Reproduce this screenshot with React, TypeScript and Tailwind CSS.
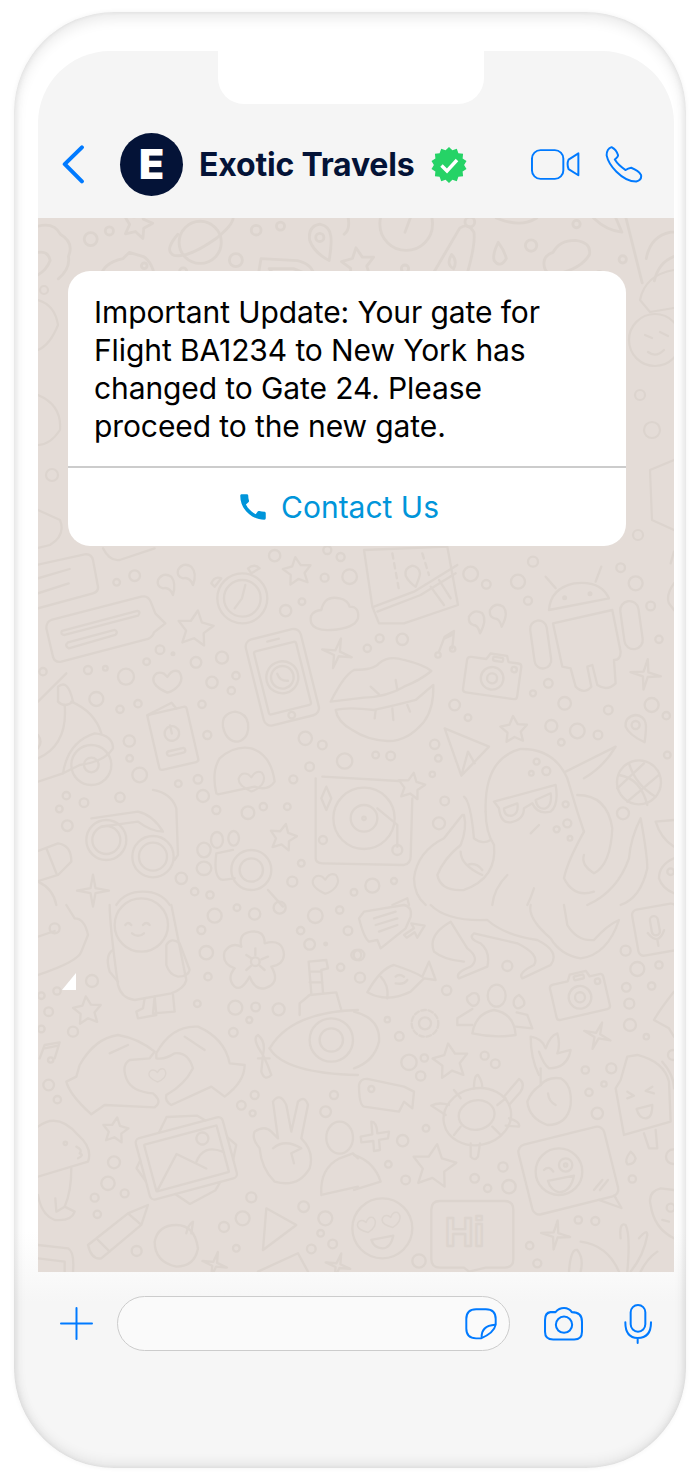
import { MdCall } from "react-icons/md";

const WALL = "#dcd4ce";
const BLUE = "#007aff";

type Dot = [number, number, number];

function starPoints(x: number, y: number, r: number, rot = 0, n = 5, inner = 0.5) {
  const pts: string[] = [];
  for (let i = 0; i < n * 2; i++) {
    const rad = i % 2 === 0 ? r : r * inner;
    const a = (Math.PI * i) / n - Math.PI / 2 + (rot * Math.PI) / 180;
    pts.push(`${(x + rad * Math.cos(a)).toFixed(1)},${(y + rad * Math.sin(a)).toFixed(1)}`);
  }
  return pts.join(" ");
}

function Star({ x, y, r, rot = 0 }: { x: number; y: number; r: number; rot?: number }) {
  return <polygon points={starPoints(x, y, r, rot)} />;
}

function Spark({ x, y, r, rot = 0 }: { x: number; y: number; r: number; rot?: number }) {
  return <polygon points={starPoints(x, y, r, rot, 4, 0.22)} />;
}

function Dots({ list }: { list: Dot[] }) {
  return (
    <>
      {list.map(([x, y, r], i) => (
        <circle key={i} cx={x} cy={y} r={r} />
      ))}
    </>
  );
}

function Heart({ x, y, s = 1, rot = 0 }: { x: number; y: number; s?: number; rot?: number }) {
  return (
    <path
      transform={`translate(${x} ${y}) rotate(${rot}) scale(${s})`}
      d="M0 35 Q-45 15 -42 -8 Q-35 -32 -10 -22 L0 -12 Q15 -38 35 -28 Q50 -10 35 12 Q20 30 0 35Z"
    />
  );
}

function Camera({ x, y, rot }: { x: number; y: number; rot: number }) {
  return (
    <g transform={`translate(${x} ${y}) rotate(${rot})`}>
      <path d="M-70 -50 H-25 L-15 -68 H35 L42 -50 H72 Q82 -50 82 -40 V48 Q82 58 72 58 H-72 Q-82 58 -82 48 V-40 Q-82 -50 -70 -50Z" />
      <circle cx="0" cy="5" r="34" />
      <circle cx="0" cy="5" r="15" />
      <rect x="-5" y="-60" width="30" height="12" rx="4" />
      <circle cx="62" cy="-30" r="8" />
    </g>
  );
}

function TopStrip() {
  return (
    <g transform="translate(38 218) scale(0.4055)">
      <path d="M0 20 Q40 10 55 40 Q90 60 75 95 Q80 125 50 150" />
      <path d="M0 85 Q25 80 30 105 Q20 130 0 140" />
      <Dots
        list={[
          [130, 52, 16],
          [176, 32, 10],
          [538, 30, 12],
          [598, 20, 10],
          [488, 104, 16],
          [358, 132, 9],
          [905, 125, 9],
          [1216, 68, 14],
          [1328, 15, 9],
          [1442, 102, 9],
          [1384, 142, 10],
        ]}
      />
      <Star x={245} y={15} r={38} rot={15} />
      <circle cx="400" cy="60" r="52" />
      <path d="M345 40 Q310 80 335 92 Q370 100 440 50 Q490 10 480 -10" />
      <path d="M150 160 Q155 110 210 100 L225 85 L260 95 Q285 110 290 160" />
      <circle cx="262" cy="118" r="7" />
      <path d="M695 15 Q665 20 670 55 Q680 85 718 105 Q725 60 722 45 Q720 20 695 15Z" />
      <circle cx="695" cy="48" r="10" />
      <Star x={790} y={115} r={42} rot={-8} />
      <circle cx="908" cy="15" r="65" />
      <path d="M905 35 L920 -5" />
      <path d="M955 170 L1040 25 Q1060 10 1075 35 Q1080 70 1050 165" />
      <circle cx="1065" cy="10" r="12" />
      <path d="M1020 90 Q1035 105 1025 125 Q1005 115 1020 90Z" />
      <path d="M1135 60 Q1120 90 1125 105 Q1140 125 1155 100 Q1150 80 1135 60Z" />
      <path d="M1250 125 Q1240 95 1270 85 Q1285 55 1325 55 Q1365 60 1360 90 Q1340 125 1280 138 Q1255 140 1250 125Z" />
      <path d="M540 160 L550 100 L640 105 Q680 115 680 145 L630 125 L570 125 L600 160" />
      <path d="M1450 0 L1490 160 M1500 100 Q1510 45 1560 35 L1568 35 M1520 155 Q1530 110 1568 95" />
      <path d="M1130 0 Q1190 25 1230 0 M1370 0 Q1400 30 1440 35 L1425 0" />
      <path d="M765 0 Q770 30 755 40" />
    </g>
  );
}

function SideStrips() {
  return (
    <g>
      <path d="M38 300 Q55 305 58 325 Q50 345 38 350" />
      <path d="M38 395 Q62 405 60 430 Q50 445 38 445" />
      <circle cx="52" cy="475" r="6" />
      <circle cx="44" cy="290" r="4" />
      <path d="M38 510 L60 520 Q66 535 50 545 L38 548" />
      <circle cx="655" cy="340" r="26" />
      <path d="M645 335 L652 338 M660 332 L668 336 M648 352 Q656 358 664 350" />
      <path d="M674 270 Q645 275 640 300 L650 312 L674 308" />
      <circle cx="640" cy="395" r="5" />
      <circle cx="652" cy="430" r="8" />
      <path d="M674 460 L650 470 L652 520 L674 530" />
      <circle cx="638" cy="535" r="5" />
    </g>
  );
}

function QuadOne() {
  return (
    <g transform="translate(38 545) scale(0.3333)">
      <Dots
        list={[
          [290, 92, 16], [236, 112, 10], [710, 32, 17], [908, 36, 12], [860, 98, 12], [935, 95, 22],
          [792, 170, 10], [743, 197, 17], [366, 314, 13], [326, 350, 10], [474, 352, 16], [552, 338, 18],
          [150, 375, 12], [202, 370, 7], [15, 380, 11], [264, 395, 24], [522, 412, 17], [594, 392, 11],
          [580, 437, 11], [175, 462, 21], [300, 476, 11], [246, 493, 11], [492, 478, 11], [508, 570, 12],
          [274, 588, 17], [275, 640, 10], [305, 690, 22], [802, 580, 20], [853, 600, 13], [815, 665, 13],
          [920, 648, 23], [766, 703, 12], [480, 703, 13], [421, 716, 10], [495, 753, 18], [535, 795, 12],
          [630, 803, 19], [676, 785, 11], [748, 785, 10], [85, 752, 11], [246, 757, 14], [138, 773, 13],
          [64, 792, 10], [88, 842, 16], [430, 1000, 17], [470, 1040, 11], [516, 1050, 11], [763, 1010, 15],
          [790, 955, 10], [948, 1042, 10], [868, 15, 12], [405, 326, 4],
        ]}
      />
      <path d="M-5 60 L140 28 Q160 25 165 45 L180 125 Q182 140 165 145 L0 190" />
      <path d="M0 100 L95 72 M0 145 L92 115" />
      <path d="M195 10 Q215 50 245 45 L350 10" />
      <path d="M40 225 L310 155 Q330 150 338 170 L352 205 L382 235 L348 262 Q345 275 330 282 L70 350 Q50 354 45 335 L25 250 Q25 230 40 225Z" />
      <path d="M72 258 L298 198 Q310 200 300 212 L80 270 Q65 268 72 258Z" />
      <path d="M90 292 L230 255 Q242 260 232 270 L92 310 Q78 302 90 292Z" />
      <path d="M360 105 Q375 80 400 95 Q415 115 405 150 Q395 125 375 130 Q355 125 360 105Z" />
      <path d="M420 75 Q435 50 460 65 Q478 85 465 120 Q455 95 435 100 Q415 95 420 75Z" />
      <circle cx="613" cy="160" r="75" />
      <circle cx="613" cy="160" r="55" />
      <path d="M622 120 L612 160 L590 190" />
      <path d="M520 115 Q530 92 550 100 L530 125Z" />
      <path d="M630 70 Q650 55 665 70 L640 85Z" />
      <Star x={472} y={252} r={56} rot={8} />
      <Star x={778} y={80} r={44} rot={-8} />
      <Star x={735} y={878} r={42} rot={12} />
      <path d="M820 235 Q810 200 850 195 Q860 150 905 160 Q930 165 935 185 Q965 185 960 220 Q950 250 880 255 Q830 258 820 235Z" />
      <g transform="translate(733 397) rotate(-14)">
        <rect x="-85" y="-133" width="170" height="266" rx="22" />
        <rect x="-65" y="-95" width="130" height="195" rx="6" />
        <path d="M-18 -115 H18" />
        <circle cx="0" cy="117" r="10" />
        <circle cx="0" cy="0" r="48" />
        <circle cx="0" cy="0" r="34" />
        <path d="M-12 -14 Q-10 10 14 14" />
      </g>
      <Spark x={897} y={325} r={46} rot={15} />
      <Heart x={388} y={408} s={1} />
      <g transform="translate(405 580) rotate(-13)">
        <rect x="-60" y="-85" width="120" height="170" rx="8" />
        <path d="M-60 -85 L20 -105 L30 -85" />
        <circle cx="0" cy="-15" r="22" />
        <path d="M0 -40 V-15" />
        <rect x="-28" y="35" width="56" height="14" rx="7" />
      </g>
      <path d="M592 500 Q550 505 555 545 Q565 590 600 590 Q635 580 630 535 Q625 505 592 500Z" />
      <path d="M535 745 Q520 680 545 640 Q590 600 640 610 Q700 630 710 710 Q690 740 650 725 L540 748Z" />
      <Heart x={640} y={708} s={0.9} />
      <path d="M0 640 Q90 600 80 480 M100 470 Q170 500 190 565" />
      <path d="M60 425 Q90 400 105 470 Q80 490 60 470Z" />
      <path d="M0 470 L85 385" />
      <circle cx="160" cy="660" r="60" />
      <circle cx="160" cy="660" r="22" />
      <path d="M75 685 Q90 590 170 565 Q225 570 225 610 Q200 650 125 660Z" />
      <path d="M0 710 L75 685 M0 570 Q15 590 0 610" />
      <circle cx="205" cy="885" r="60" />
      <circle cx="205" cy="885" r="42" />
      <circle cx="345" cy="935" r="62" />
      <circle cx="345" cy="935" r="42" />
      <path d="M160 820 L300 800 Q345 810 375 860 Q340 860 300 830 L190 845" />
      <path d="M345 735 Q400 745 415 790 L420 930 L410 945" />
      <path d="M-5 920 L60 895 Q100 900 100 950 L60 990 L-5 1010 M25 910 L55 985" />
      <path d="M0 1010 Q45 1030 55 1080" />
      <Spark x={165} y={1037} r={48} />
      <ellipse cx="537" cy="885" rx="18" ry="24" />
      <ellipse cx="587" cy="880" rx="16" ry="22" />
      <ellipse cx="498" cy="915" rx="20" ry="22" />
      <ellipse cx="498" cy="970" rx="22" ry="20" />
      <path d="M585 915 L535 925 Q525 1000 555 1005 L590 1000" />
      <circle cx="640" cy="975" r="60" />
      <circle cx="640" cy="975" r="35" />
      <path d="M690 1035 L735 1085" />
      <path d="M865 725 L880 760 L865 795 L850 760Z" />
      <circle cx="855" cy="885" r="12" />
      <Heart x={862} y={1015} s={0.9} />
      <path d="M235 1080 Q260 1040 315 1040 Q370 1040 395 1080" />
    </g>
  );
}

function QuadTwo() {
  return (
    <g transform="translate(354 545) scale(0.3333)">
      <Dots
        list={[
          [350, 87, 22], [397, 118, 13], [492, 110, 21], [537, 50, 15], [522, 167, 12], [800, 68, 13],
          [845, 115, 21], [890, 183, 13], [915, 283, 11], [77, 280, 12], [40, 310, 11], [145, 283, 17],
          [302, 480, 16], [342, 518, 10], [583, 415, 13], [537, 445, 9], [632, 475, 19], [763, 495, 13],
          [893, 480, 21], [937, 512, 11], [592, 543, 18], [670, 558, 22], [732, 570, 13], [622, 592, 10],
          [242, 598, 14], [253, 640, 10], [235, 688, 8], [65, 630, 10], [110, 633, 13], [940, 630, 10],
          [272, 768, 13], [255, 835, 18], [807, 805, 18], [120, 1008, 9], [55, 1022, 21],
        ]}
      />
      <path d="M30 15 L280 5 L312 180 L150 235 L75 235 L55 185Z" />
      <path d="M60 185 L180 140 L310 60 M70 200 L200 150 L305 85 M230 125 L270 180 M255 105 L290 160" />
      <path d="M175 62 Q150 70 155 92 Q165 112 185 125 Q198 95 198 85 Q195 65 175 62Z" />
      <path d="M115 25 L135 135 M205 25 L225 90" strokeDasharray="16 14" />
      <path d="M345 215 Q360 190 385 205 Q400 225 378 265 Q372 240 358 240 Q342 235 345 215Z" />
      <path d="M408 195 Q423 170 448 185 Q465 205 443 245 Q437 220 421 220 Q405 215 408 195Z" />
      <path d="M255 320 L272 275 L300 258 L295 310 M272 280 L298 268" />
      <circle cx="252" cy="330" r="8" />
      <circle cx="296" cy="312" r="8" />
      <Camera x={415} y={395} rot={8} />
      <path d="M585 195 Q590 130 660 115 Q740 105 765 160Z" />
      <path d="M605 130 L575 95 M725 110 L742 65" />
      <circle cx="632" cy="158" r="4" />
      <circle cx="708" cy="146" r="4" />
      <path d="M597 235 L775 195 L800 320 Q800 345 780 345 L785 415 Q760 440 730 420 L715 360 L700 365 L712 425 Q690 450 665 425 L650 370 L625 365Z" />
      <rect x="535" y="226" width="50" height="145" rx="25" transform="rotate(-8 560 298)" />
      <rect x="805" y="168" width="55" height="145" rx="27" transform="rotate(-8 832 240)" />
      <Spark x={875} y={388} r={46} rot={8} />
      <path d="M-70 470 Q-30 390 0 375 Q60 375 75 355 Q105 330 150 345 Q210 360 232 378 Q200 405 150 425 Q100 455 30 458Z" />
      <path d="M-55 495 Q-20 485 60 495 Q130 480 185 465 Q215 440 238 420 Q240 490 210 530 Q160 590 100 588 Q40 585 -5 555 Q-50 530 -55 495Z" />
      <path d="M50 425 L75 448 M125 405 L130 435 M65 495 L62 520 M115 490 L118 525 M160 480 L168 500" />
      <path d="M272 550 L405 605 L322 692Z M322 692 L342 620 L362 655" />
      <Star x={480} y={555} r={42} rot={-4} />
      <path d="M845 510 Q812 515 815 545 Q825 570 872 592 Q878 545 875 535 Q870 512 845 510Z" />
      <circle cx="845" cy="540" r="12" />
      <circle cx="855" cy="712" r="66" />
      <path d="M795 690 Q860 700 880 780 M825 655 Q845 720 905 755 M790 730 L870 655 M820 770 L915 690" />
      <path d="M395 800 Q390 640 500 612 Q600 610 640 700 L670 800 L690 860" />
      <path d="M420 770 L605 720 Q615 780 590 800 Q550 810 535 775 L510 790 Q510 825 470 832 Q440 835 435 790Z" />
      <path d="M450 790 Q450 815 475 812 Q495 805 490 775Z M545 765 Q550 795 575 790 Q595 780 590 745Z" />
      <Dots list={[[577, 678, 12], [548, 650, 9], [532, 685, 7], [635, 778, 9], [640, 835, 12], [608, 853, 9], [648, 880, 7]]} />
      <path d="M530 865 L555 840" />
      <path d="M395 800 Q395 860 420 900 Q430 1000 330 1035 Q260 1040 250 990 Q270 940 320 900 Q340 850 330 810" />
      <path d="M330 755 Q350 770 360 880 Q385 900 410 885" />
      <path d="M180 1000 Q190 920 270 880 L325 810 M180 1000 Q180 1050 215 1080" />
      <path d="M320 920 Q320 960 385 990 M340 960 Q365 950 385 975" />
      <path d="M635 680 L785 605 Q750 665 690 700" />
      <path d="M690 860 Q640 950 630 1000 Q660 1060 720 1040" />
      <path d="M670 750 Q760 750 775 850 Q770 960 720 985 Q680 960 690 930" />
      <path d="M860 820 Q830 880 825 940 Q790 1040 700 1080 M860 820 Q880 930 880 970 Q860 1060 800 1080" />
      <path d="M460 990 Q420 1030 415 1080 M540 1030 Q530 1060 520 1080" />
      <path d="M905 830 L960 825 M905 830 Q920 880 960 905" />
      <path d="M960 940 Q915 960 915 1000 Q925 1030 960 1045" />
      <path d="M960 115 Q935 150 945 175 L960 195 M960 20 L950 55" />
      <circle cx="950" cy="980" r="10" />
      <path d="M115 1080 L160 1060 L165 1080" />
      <path d="M-115 700 L-115 940 Q-115 955 -95 955 L150 960 Q170 955 170 935 L175 760" />
      <path d="M-95 695 L135 708" />
      <circle cx="30" cy="820" r="92" />
      <circle cx="30" cy="820" r="40" />
      <circle cx="30" cy="820" r="5" />
      <path d="M70 790 L130 840 L130 905" />
      <circle cx="130" cy="915" r="15" />
      <Star x={172} y={725} r={42} rot={10} />
    </g>
  );
}

function QuadThree() {
  return (
    <g transform="translate(38 905) scale(0.3333)">
      <Dots
        list={[
          [530, 32, 21], [650, 27, 17], [597, 8, 10], [725, 8, 18], [832, 32, 22], [905, 15, 11], [490, 75, 12],
          [788, 77, 11], [930, 77, 13], [815, 118, 16], [505, 143, 20], [863, 117, 4], [510, 215, 11], [908, 187, 11],
          [955, 150, 15], [162, 228, 18], [10, 272, 10], [57, 258, 11], [32, 320, 13], [478, 296, 10], [592, 308, 21],
          [653, 306, 13], [722, 313, 18], [634, 345, 9], [10, 372, 10], [105, 380, 15], [586, 382, 13], [32, 540, 16],
          [58, 584, 11], [650, 570, 12], [610, 601, 13], [644, 625, 9], [888, 570, 12], [863, 620, 16], [228, 772, 18],
          [210, 835, 20], [260, 865, 12], [170, 878, 12], [178, 928, 11], [640, 877, 15], [797, 905, 16], [862, 940, 21],
          [848, 985, 10], [614, 940, 21], [558, 966, 15], [884, 1017, 13], [820, 1032, 13], [595, 1030, 10], [296, 1038, 15],
        ]}
      />
      <path d="M0 210 Q120 170 130 140 L150 90 Q140 40 110 40 L85 0" />
      <circle cx="50" cy="70" r="15" />
      <path d="M0 95 L50 78" />
      <circle cx="310" cy="60" r="80" />
      <path d="M215 0 Q215 60 240 240 Q250 280 290 285 L400 265 Q440 250 445 225 L400 0" />
      <path d="M385 120 Q400 95 425 115 L455 195 Q450 215 420 215 Q395 210 385 180Z" />
      <path d="M225 135 Q200 150 215 200 L240 230" />
      <path d="M320 280 L315 310 L295 320 L300 340 L355 330 L350 275 M350 275 L345 325 L410 320 L405 270" />
      <path d="M262 60 Q270 48 280 60 M315 60 Q325 48 335 60 M282 85 Q300 100 318 85" />
      <Star x={148} y={318} r={44} rot={-6} />
      <path d="M5 460 L20 420 L65 412 L50 460 M20 430 L60 422" />
      <circle cx="38" cy="465" r="8" />
      <path d="M350 440 Q300 400 240 390 Q170 400 125 480 L115 515 L85 530 Q95 570 160 628 L200 600 L350 607 Q375 590 345 565 Q280 560 265 520 Q250 480 275 465 L335 460Z" />
      <path d="M355 445 Q400 360 480 365 Q560 400 575 475 L620 480 Q620 530 560 575 L520 545 L400 600 Q380 590 385 570 Q440 540 465 490 Q450 440 410 445 Q380 465 355 460Z" />
      <path d="M215 445 L270 420 M440 395 L500 435" />
      <Heart x={358} y={510} s={0.6} />
      <path d="M640 80 Q680 75 680 115 Q735 100 738 150 Q735 180 700 185 Q730 235 680 250 Q650 255 635 215 Q610 260 590 245 Q565 220 590 190 Q550 175 560 140 Q580 110 610 125 Q600 85 640 80Z" />
      <circle cx="652" cy="170" r="13" />
      <path d="M652 130 V150 M625 150 L640 160 M625 195 L640 182 M680 195 L665 182 M690 155 L670 163" />
      <path d="M695 430 Q760 320 960 315" />
      <path d="M695 430 Q740 505 960 510" />
      <circle cx="880" cy="405" r="65" />
      <circle cx="880" cy="405" r="35" />
      <path d="M785 330 L785 295 L815 270 L895 262 L910 315" />
      <path d="M820 265 L812 170 L865 165 L870 190 L850 195 L855 262 M815 200 H848 M815 232 H852" />
      <path d="M675 450 Q640 400 660 390 Q685 410 675 450 Q690 480 700 510 Q680 530 670 500Z M660 460 H695" />
      <g transform="translate(445 760) rotate(-15)">
        <rect x="-135" y="-95" width="270" height="190" rx="14" />
        <rect x="-112" y="-72" width="225" height="145" rx="2" />
        <path d="M-108 70 L-25 -20 L50 45 M25 20 Q60 -30 112 10" />
        <circle cx="62" cy="-45" r="18" />
        <path d="M-60 -95 L-25 -135 L65 -115 L85 -95 M-135 -30 L-152 -10 L-135 35 M135 -30 L155 0 L135 40 M-60 95 L-25 135 L60 115 L80 95" />
      </g>
      <path d="M720 700 L705 590 Q725 560 745 600 L760 680 L780 590 Q800 570 810 600 L790 700 Q830 740 815 790 Q780 850 710 830 Q670 790 665 730 Q640 700 650 680 Q680 660 700 680 L720 700Z" />
      <path d="M705 730 Q740 700 790 730 L760 745 L768 775" />
      <ellipse cx="905" cy="698" rx="40" ry="48" />
      <path d="M850 870 Q845 790 905 760 L945 745 L960 760 M850 870 L960 845" />
      <path d="M0 665 Q60 620 120 690 Q165 730 150 770 L0 815" />
      <circle cx="82" cy="715" r="5" />
      <path d="M115 725 Q135 735 125 745 Q140 750 120 760" />
      <path d="M100 790 Q100 860 80 905 L110 920 Q100 950 50 945 Q10 930 0 870" />
      <path d="M52 880 L55 920 L80 905" />
      <Star x={232} y={677} r={40} rot={8} />
      <path d="M150 1020 L270 925 L330 900 L310 960 L190 1060 Q160 1065 150 1020Z M270 925 L310 960 M175 1000 L215 1040" />
      <path d="M415 960 Q470 960 480 1030 Q470 1085 415 1085 Q350 1070 350 1010 Q360 960 415 960Z" />
      <path d="M445 985 Q450 960 465 950 L460 985" />
      <path d="M685 910 L775 960 L675 1035Z" />
      <Spark x={530} y={1078} r={38} rot={15} />
      <Spark x={900} y={1082} r={38} rot={15} />
      <path d="M660 1100 L780 1045 L810 1100" />
      <path d="M0 1020 L90 1030 Q110 1040 105 1100 M0 1060 L80 1070 V1100" />
    </g>
  );
}

function QuadFour() {
  return (
    <g transform="translate(354 905) scale(0.3333)">
      <Dots
        list={[
          [15, 150, 16], [18, 218, 15], [278, 256, 14], [460, 183, 15], [815, 137, 15], [850, 192, 21], [915, 180, 11],
          [817, 247, 13], [893, 243, 11], [826, 296, 15], [828, 360, 18], [877, 395, 8], [100, 344, 8], [136, 394, 13],
          [165, 472, 23], [211, 459, 11], [200, 513, 14], [392, 452, 12], [424, 476, 13], [694, 495, 11], [772, 490, 15],
          [750, 537, 8], [705, 562, 11], [730, 625, 17], [216, 670, 10], [146, 707, 17], [103, 778, 10], [155, 825, 13],
          [447, 786, 14], [362, 820, 13], [401, 850, 11], [465, 845, 20], [835, 822, 11], [673, 945, 11], [724, 948, 12],
          [527, 1022, 11], [550, 1075, 12], [195, 1068, 20],
        ]}
      />
      <path d="M30 20 L150 0 Q175 5 170 35 L155 70 L80 130 L70 105 L45 110 Q30 100 15 40Z" />
      <path d="M60 40 L125 20 M65 60 L130 40 M75 80 L130 60" />
      <path d="M150 90 L180 70 L172 55 L212 62 L190 98 L182 82 L158 98Z" />
      <path d="M40 262 Q80 190 120 180 Q180 200 205 215 L225 170 L245 225 L210 220 L170 260 Q100 295 40 262Z" />
      <path d="M80 215 Q105 240 100 280 M125 235 Q150 240 160 225 M125 215 Q135 205 150 215" />
      <path d="M230 0 Q280 50 400 45 Q450 90 550 105 Q620 140 590 180 L505 220 Q490 205 540 180 Q560 150 490 115 L360 85 Q340 100 380 115 Q410 140 400 185 L315 220 Q300 205 350 185 Q380 160 340 130 L290 50 Q220 90 240 140 Q270 165 330 170" />
      <path d="M530 0 Q520 40 590 100 Q620 150 680 160 Q760 150 795 45 Q760 60 720 105 Q670 110 640 60 L630 0" />
      <g transform="translate(905 75) rotate(-10)">
        <rect x="-62" y="-70" width="135" height="140" rx="16" />
        <rect x="-12" y="-42" width="24" height="58" rx="12" />
        <path d="M-25 5 Q0 50 25 5 M0 28 V48" />
      </g>
      <Camera x={677} y={272} rot={-13} />
      <ellipse cx="428" cy="272" rx="27" ry="33" />
      <path d="M355 265 Q375 260 375 285 Q370 305 355 302 Q335 290 340 275Z M495 270 Q515 285 510 300 Q490 320 480 300 Q475 280 495 270Z" />
      <path d="M355 385 Q365 325 420 315 Q480 325 485 390 Q420 400 355 385Z" />
      <path d="M355 312 L310 340 L310 360 L355 360 M488 322 L520 330 L535 370 L485 365" />
      <circle cx="213" cy="355" r="40" strokeDasharray="14 8" />
      <circle cx="213" cy="355" r="18" />
      <path d="M0 320 Q80 340 75 410 Q60 470 0 490" />
      <Star x={290} y={470} r={55} rot={-8} />
      <Spark x={730} y={392} r={42} rot={20} />
      <path d="M555 510 Q530 460 530 395 Q565 400 575 430 Q590 390 610 385 Q620 420 610 445 L650 435 Q640 490 585 490 Q570 480 555 440" />
      <path d="M560 490 V540" />
      <path d="M560 540 Q580 515 620 520 Q655 540 650 600 Q640 660 580 660 Q525 640 520 590 Q530 560 560 540Z" />
      <path d="M582 565 Q585 590 605 600" />
      <path d="M820 455 L850 450 Q930 470 945 530 L950 650 L810 690 L785 550 L800 525Z" />
      <path d="M925 470 Q960 510 960 550" />
      <path d="M870 685 L885 730 L910 730 L905 675" />
      <path d="M820 560 L840 572 L820 580 M895 545 L875 558 L900 565" />
      <path d="M848 612 L895 600 Q895 640 875 640 Q855 640 848 612Z" />
      <path d="M15 540 Q20 520 40 522 L150 545 L180 560 L175 610 L150 590 L135 620 L30 605 Q15 600 15 540Z" />
      <circle cx="52" cy="552" r="9" />
      <path d="M52 650 Q68 650 70 685 L105 680 L102 700 L75 705 L78 735 L60 738 L58 708 L22 712 L20 695 L55 688Z" />
      <ellipse cx="370" cy="635" rx="102" ry="85" transform="rotate(-12 370 635)" />
      <ellipse cx="368" cy="630" rx="54" ry="44" transform="rotate(-12 368 630)" />
      <path d="M320 580 L300 555 M430 600 L455 580 M415 665 L440 690 M320 665 L300 690" />
      <path d="M450 575 L495 522 Q515 535 500 560 L465 600" />
      <path d="M360 550 Q360 510 372 510 Q385 530 385 548" />
      <path d="M275 630 L232 602 Q255 590 285 600 M465 640 Q500 650 495 665 L455 662" />
      <path d="M350 715 V755 Q362 770 372 755 L378 715" />
      <Star x={240} y={785} r={68} rot={8} />
      <path d="M830 740 Q810 765 820 778 Q840 780 845 760 Q842 750 830 740Z" />
      <g transform="translate(640 795) rotate(-14)">
        <rect x="-130" y="-105" width="265" height="215" rx="22" />
        <path d="M70 110 L130 150 L118 108" />
      </g>
      <circle cx="615" cy="800" r="70" />
      <circle cx="635" cy="780" r="20" />
      <circle cx="635" cy="780" r="5" />
      <path d="M570 795 Q585 780 598 800 M582 828 L660 812 Q650 860 615 862 Q590 855 582 828Z M720 855 L745 825 M738 855 L762 825" />
      <path d="M0 750 Q60 770 80 830 L0 855" />
      <circle cx="85" cy="970" r="90" />
      <Heart x={38} y={960} s={0.65} rot={-12} />
      <Heart x={112} y={945} s={0.65} rot={-12} />
      <path d="M52 1005 L118 992 Q110 1030 85 1030 Q60 1030 52 1005Z" />
      <path d="M258 888 H452 Q478 888 478 914 V1062 Q478 1088 452 1088 H395 L345 1100 L330 1088 H258 Q232 1088 232 1062 V914 Q232 888 258 888Z" />
      <text x="272" y="1024" fontFamily="'Liberation Sans', sans-serif" fontWeight="700" fontSize="120">
        Hi
      </text>
      <Spark x={605} y={990} r={44} rot={8} />
      <path d="M645 1100 Q650 1030 670 1035 Q690 1060 680 1100 M680 1010 Q760 1020 795 1100 M800 1000 Q795 950 815 960 Q830 990 820 1100 M855 1000 Q880 970 880 990 Q870 1050 830 1100 M910 1040 Q880 1060 860 1100" />
      <path d="M960 855 L920 850 Q880 860 890 900 Q900 970 960 1000" />
      <circle cx="950" cy="908" r="12" />
      <path d="M925 945 L945 950" />
      <path d="M960 260 Q920 310 900 345 L945 370 L960 395" />
      <circle cx="957" cy="450" r="15" />
      <circle cx="958" cy="755" r="22" />
    </g>
  );
}

function Wallpaper() {
  return (
    <svg
      className="absolute inset-0 h-full w-full"
      viewBox="38 218 636 1054"
      fill="none"
      stroke={WALL}
      strokeWidth="2.2"
      strokeLinecap="round"
      strokeLinejoin="round"
    >
      <g strokeWidth="7">
        <TopStrip />
        <QuadOne />
        <QuadTwo />
        <QuadThree />
        <QuadFour />
      </g>
      <SideStrips />
    </svg>
  );
}

function Header() {
  return (
    <div className="flex h-[167px] flex-col items-center rounded-t-[72px] bg-[#f5f5f5]">
      {/* Notch */}
      <div className="mr-[10px] h-[53px] w-[266px] rounded-b-[26px] bg-white" />
      <div className="mt-[29px] flex h-[63px] w-full items-center pl-6 pr-[31px]">
        <svg className="w-[23px] h-[39px] shrink-0" viewBox="186 435 64 116" fill="none" stroke={BLUE} strokeWidth="12" strokeLinecap="round" strokeLinejoin="round">
          <path d="M243 442 L192 492 L243 543" />
        </svg>
        <div className="ml-[35px] flex h-[63px] w-[63px] shrink-0 items-center justify-center rounded-full bg-[#041337] font-['Inter',sans-serif] text-[41px] font-black leading-none text-white">
          E
        </div>
        <span className="ml-4 font-['Inter',sans-serif] text-[32px] font-bold tracking-[-0.2px] text-[#041337]">Exotic Travels</span>
        <svg className="ml-[17px] h-9 w-9 shrink-0" viewBox="-18 -18 36 36">
          <polygon fill="#25d366" points={starPoints(0, 0, 18, 0, 14, 0.84)} />
          <path d="M-7.5 0.5 L-2 6 L8 -5" fill="none" stroke="#fff" strokeWidth="3.4" />
        </svg>
        <svg className="ml-auto h-[33px] w-[49px] shrink-0" viewBox="543 444 150 96" fill="none" stroke={BLUE} strokeWidth="6" strokeLinejoin="round">
          <rect x="546" y="448" width="96" height="88" rx="26" />
          <path d="M688 458 V525 L658 506 Q652 490 658 477Z" />
        </svg>
        <svg className="ml-[25px] h-[39px] w-[38px] shrink-0" viewBox="765 434 116 118" fill="none" stroke={BLUE} strokeWidth="6" strokeLinejoin="round">
          <path d="M785 440 Q770 445 770 465 Q775 490 800 515 Q830 545 860 545 Q878 540 875 525 Q868 512 845 503 Q835 505 828 510 Q805 495 795 478 Q805 470 805 465 Q800 448 785 440Z" />
        </svg>
      </div>
    </div>
  );
}

function Bubble() {
  return (
    <div className="relative ml-[30px] w-[558px] overflow-hidden rounded-[22px] bg-white font-['Inter',sans-serif]">
      <p className="border-b-2 border-[#cccccc] px-[26px] pb-[21px] pt-[22px] text-[30px] leading-[38px] tracking-[-0.1px] text-black">
        Important Update: Your gate for
        <br />
        Flight BA1234 to New York has
        <br />
        changed to Gate 24. Please
        <br />
        proceed to the new gate.
      </p>
      <div className="flex h-[78px] items-center justify-center pr-[19px] text-[#0095da]">
        <MdCall className="h-[34px] w-[34px]" />
        <span className="ml-[11px] text-[30px]">Contact Us</span>
      </div>
    </div>
  );
}

function Footer() {
  return (
    <div className="flex items-center pl-[22px] pt-6">
      <svg className="h-[33px] w-[33px] shrink-0" viewBox="180 170 100 100" fill="none" stroke={BLUE} strokeWidth="6" strokeLinecap="round">
        <path d="M183 220 H277 M230 173 V267" />
      </svg>
      <div className="ml-6 flex h-[55px] w-[393px] items-center justify-end rounded-full border border-[#cccccc] bg-[#fafafa] pr-3">
        <svg className="h-8 w-8" viewBox="346 174 98 98" fill="none" stroke={BLUE} strokeWidth="6" strokeLinejoin="round">
          <path d="M380 178 H410 Q440 178 440 208 V225 Q435 250 395 267 H380 Q350 267 350 237 V208 Q350 178 380 178Z" />
          <path d="M397 265 Q395 228 438 225" />
        </svg>
      </div>
      <svg className="ml-[34px] h-[34px] w-[39px] shrink-0" viewBox="581 167 115 100" fill="none" stroke={BLUE} strokeWidth="6" strokeLinejoin="round">
        <path d="M600 182 H615 Q625 170 640 170 Q655 170 663 182 Q693 182 693 210 V240 Q693 263 670 263 H608 Q584 263 584 240 V205 Q584 184 600 182Z" />
        <circle cx="640" cy="219" r="24" />
      </svg>
      <svg className="ml-[41px] h-10 w-7 shrink-0" viewBox="822 163 82 120" fill="none" stroke={BLUE} strokeWidth="6" strokeLinecap="round">
        <rect x="841" y="166" width="44" height="80" rx="22" />
        <path d="M825 218 Q825 265 862 265 Q902 265 902 218 M862 265 V280" />
      </svg>
    </div>
  );
}

export default function App() {
  return (
    <div className="h-[1483px] w-[699px] overflow-hidden bg-white pl-3.5 pt-3">
      <div className="h-[1456px] w-[672px] rounded-[100px] bg-[linear-gradient(to_bottom,#ffffff_1220px,#f6f6f6_1290px)] pl-6 pr-3 pt-[39px] shadow-[inset_0_6px_14px_rgba(0,0,0,0.09),inset_0_-6px_12px_rgba(0,0,0,0.06),inset_2px_0_4px_rgba(0,0,0,0.03),inset_-2px_0_4px_rgba(0,0,0,0.03),0_0_5px_rgba(0,0,0,0.05)]">
        <Header />
        {/* Chat wallpaper and message */}
        <div className="relative h-[1054px] overflow-hidden bg-[#e4dcd7] pt-[53px]">
          <Wallpaper />
          <Bubble />
          <div className="absolute left-6 top-[755px] h-[17px] w-[14px] bg-white [clip-path:polygon(100%_0,100%_100%,0_100%)]" />
        </div>
        <Footer />
      </div>
    </div>
  );
}
